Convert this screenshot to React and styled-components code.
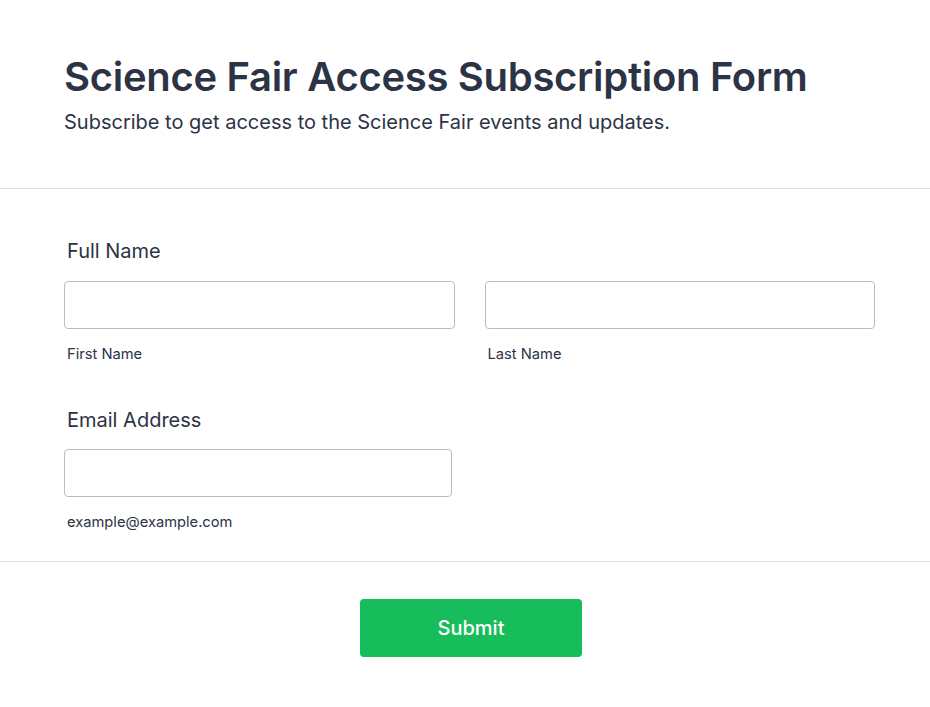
import React from "react";
import styled, { createGlobalStyle } from "styled-components";

const Global = createGlobalStyle`
  html, body { margin: 0; padding: 0; background: #ffffff; }
  body { font-family: Inter, "Noto Sans", sans-serif; color: #2c3345; }
  * { box-sizing: border-box; }
`;

const Page = styled.div`
  width: 930px;
  min-height: 707px;
  background: #fff;
`;

const Header = styled.header`
  padding: 52px 55px 54px 64px;
  border-bottom: 1px solid #dcdde8;
`;

const Title = styled.h1`
  margin: 0;
  font-size: 40px;
  line-height: 50px;
  font-weight: 600;
  color: #2c3345;
  letter-spacing: -0.3px;
`;

const Subtitle = styled.p`
  margin: 8px 0 0;
  font-size: 20px;
  line-height: 24px;
  font-weight: 400;
  color: #2c3345;
`;

const Body = styled.section`
  padding: 50px 55px 30px 64px;
  border-bottom: 1px solid #e4e4f0;
  display: flex;
  flex-direction: column;
  gap: 45px;
`;

const Field = styled.div`
  display: flex;
  flex-direction: column;
`;

const Label = styled.label`
  font-size: 20px;
  line-height: 24px;
  font-weight: 400;
  color: #2c3345;
  padding-left: 3px;
  margin-bottom: 17.5px;
`;

const Row = styled.div`
  display: grid;
  grid-template-columns: ${(p) => p.$cols};
  column-gap: 30px;
`;

const Col = styled.div`
  display: flex;
  flex-direction: column;
`;

const Input = styled.input`
  width: 100%;
  height: 48px;
  border: 1px solid #b8bdcc;
  border-radius: 4px;
  background: #fff;
  padding: 0 12px;
  font-family: inherit;
  font-size: 16px;
  outline: none;
`;

const Sub = styled.span`
  font-size: 14.7px;
  line-height: 18px;
  color: #2c3345;
  padding-left: 3px;
  margin-top: 16px;
`;

const Footer = styled.div`
  display: flex;
  justify-content: center;
  padding: 37px 0 50px 12px;
`;

const Button = styled.button`
  width: 222px;
  height: 58px;
  border: none;
  border-radius: 4px;
  background: #18bd5b;
  color: #fff;
  font-family: inherit;
  font-size: 20px;
  font-weight: 500;
  cursor: pointer;
`;

export default function App() {
  return (
    <Page>
      <Global />
      <Header>
        <Title>Science Fair Access Subscription Form</Title>
        <Subtitle>Subscribe to get access to the Science Fair events and updates.</Subtitle>
      </Header>
      <Body>
        <Field>
          <Label>Full Name</Label>
          <Row $cols="1fr 1fr">
            <Col>
              <Input type="text" />
              <Sub>First Name</Sub>
            </Col>
            <Col>
              <Input type="text" />
              <Sub>Last Name</Sub>
            </Col>
          </Row>
        </Field>
        <Field>
          <Label>Email Address</Label>
          <Row $cols="388px">
            <Col>
              <Input type="email" />
              <Sub>example@example.com</Sub>
            </Col>
          </Row>
        </Field>
      </Body>
      <Footer>
        <Button>Submit</Button>
      </Footer>
    </Page>
  );
}
